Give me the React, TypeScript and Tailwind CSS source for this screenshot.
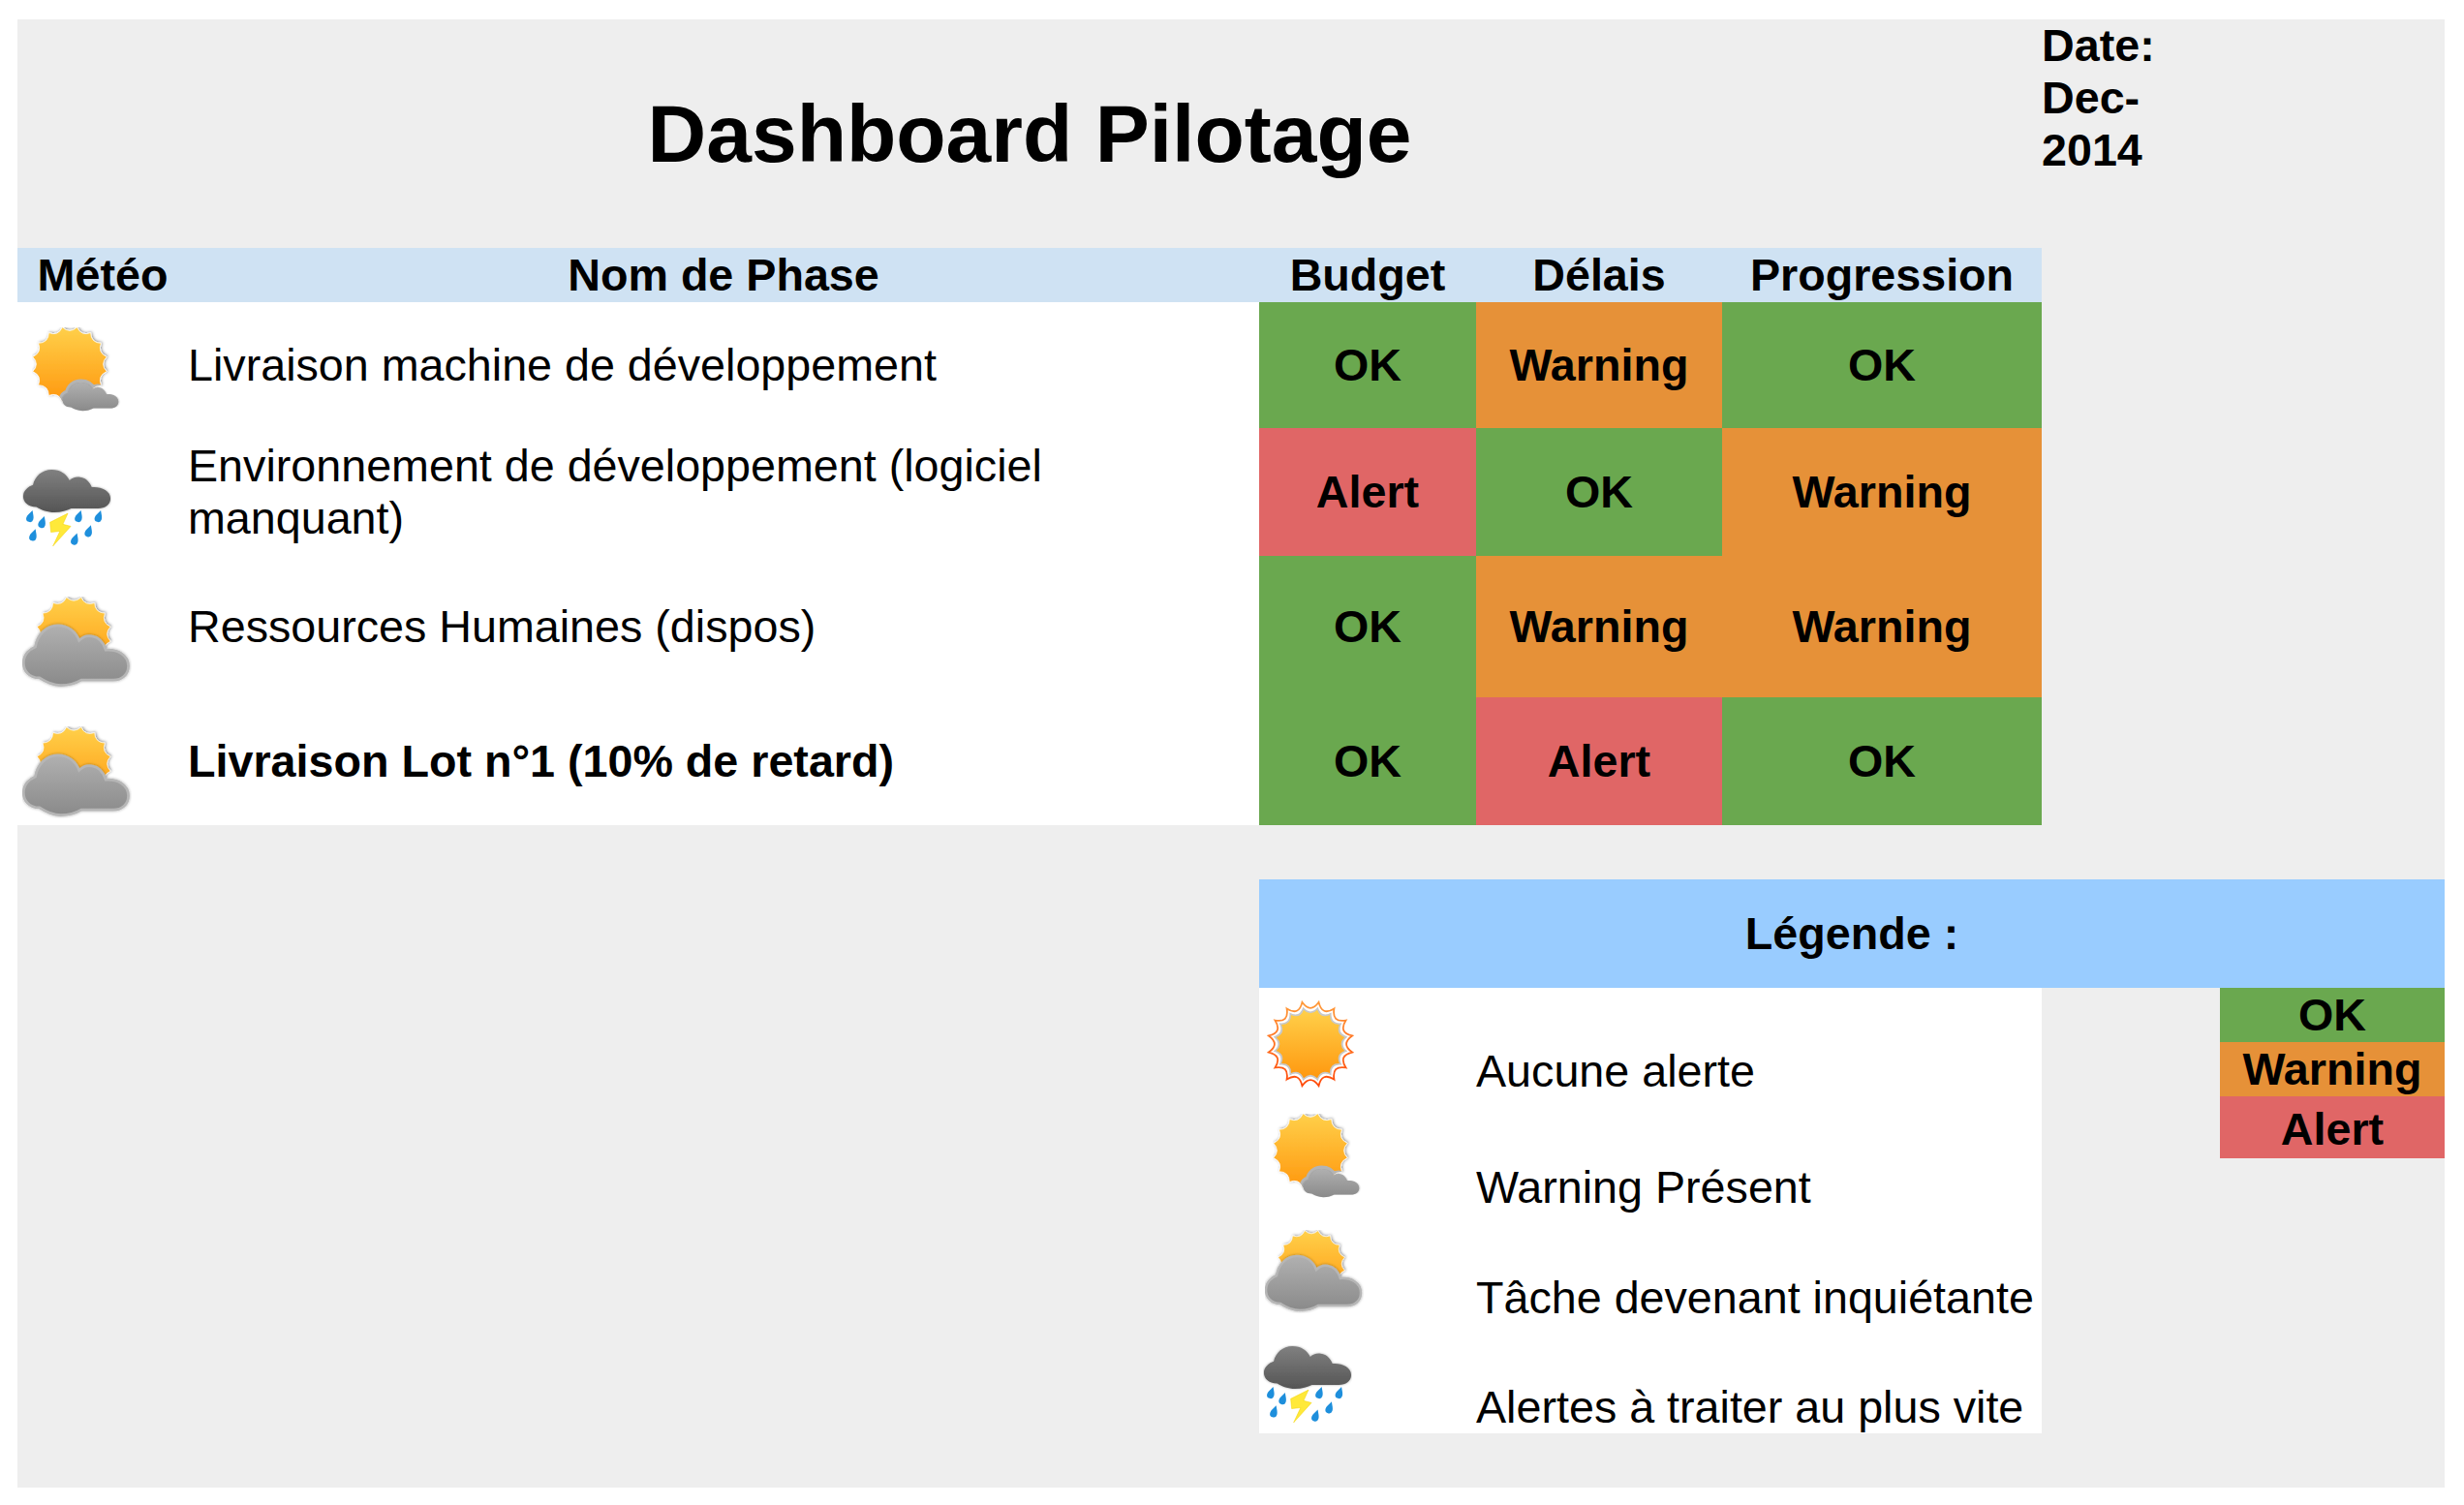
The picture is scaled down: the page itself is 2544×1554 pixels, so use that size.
import React from "react";

type Status = "OK" | "Warning" | "Alert";

const statusColor: Record<Status, string> = {
  OK: "bg-[#6aa84f]",
  Warning: "bg-[#e69138]",
  Alert: "bg-[#e06666]",
};

function sunPath(cx: number, cy: number, outer: number, ctrl: number, n: number) {
  const pts: string[] = [];
  const at = (r: number, a: number) =>
    `${(cx + r * Math.cos(a)).toFixed(2)} ${(cy + r * Math.sin(a)).toFixed(2)}`;
  for (let i = 0; i < n; i++) {
    const a = (i / n) * Math.PI * 2 + Math.PI / n;
    const next = ((i + 1) / n) * Math.PI * 2 + Math.PI / n;
    const mid = (a + next) / 2;
    if (i === 0) pts.push(`M${at(outer, a)}`);
    pts.push(`Q${at(ctrl, mid)} ${at(outer, next)}`);
  }
  return pts.join(" ") + "Z";
}

const cloudD =
  "M16 76 C6 76 1 69 1 62 C1 54 7 49 12 47 C14 36 22 27 33 27 C43 27 50 33 53 41 C56 38 60 36 65 37 C72 38 76 44 78 50 C88 49 99 54 99 65 C99 73 93 78 85 78 L55 78 C50 81 44 83 36 83 C28 83 22 80 16 76Z";

// shared gradients and shadows for all the weather icons
function IconDefs() {
  return (
    <svg width="0" height="0" className="absolute">
      <defs>
        <linearGradient id="sunGrad" x1="0" y1="0" x2="0" y2="1">
          <stop offset="0" stopColor="#ffd04a" />
          <stop offset="1" stopColor="#ff980f" />
        </linearGradient>
        <linearGradient id="ringGrad" x1="0" y1="0" x2="0" y2="1">
          <stop offset="0" stopColor="#ff9a3a" />
          <stop offset="1" stopColor="#ff4a0a" />
        </linearGradient>
        <linearGradient id="grayGrad" x1="0" y1="0" x2="0" y2="1">
          <stop offset="0" stopColor="#b0b0b0" />
          <stop offset="1" stopColor="#8a8a8a" />
        </linearGradient>
        <linearGradient id="darkGrad" x1="0" y1="0" x2="0" y2="1">
          <stop offset="0" stopColor="#808080" />
          <stop offset="1" stopColor="#555555" />
        </linearGradient>
        <filter id="softShadow" x="-20%" y="-20%" width="140%" height="140%">
          <feDropShadow dx="0" dy="0" stdDeviation="1.5" floodColor="#000" floodOpacity="0.35" />
        </filter>
        <filter id="sunShadow" x="-20%" y="-20%" width="140%" height="140%">
          <feDropShadow dx="1" dy="-0.5" stdDeviation="1.6" floodColor="#000" floodOpacity="0.45" />
        </filter>
      </defs>
    </svg>
  );
}

function SunIcon({ className }: { className: string }) {
  return (
    <svg viewBox="0 0 90 92" className={className}>
      <path d={sunPath(45, 46, 44, 31, 16)} fill="none" stroke="url(#ringGrad)" strokeWidth="1.8" />
      <path d={sunPath(45, 46, 39, 29, 16)} fill="#c8c8c8" />
      <path d={sunPath(45, 46, 36, 28, 16)} fill="url(#sunGrad)" />
    </svg>
  );
}

function SunCloudIcon({ className }: { className: string }) {
  const sun = sunPath(39, 38, 39, 31, 16);
  return (
    <svg viewBox="0 0 94 90" className={className}>
      <clipPath id="sunClip">
        <path d={sun} />
      </clipPath>
      <path d={sun} fill="url(#sunGrad)" stroke="#fff" strokeWidth="0.8" filter="url(#sunShadow)" />
      <g clipPath="url(#sunClip)">
        <path
          transform="translate(31 43) scale(0.59 0.52)"
          d={cloudD}
          fill="#b4b4b4"
          stroke="#b4b4b4"
          strokeWidth="14"
        />
      </g>
      <path
        transform="translate(31 43) scale(0.59 0.52)"
        d={cloudD}
        fill="url(#grayGrad)"
        filter="url(#softShadow)"
      />
    </svg>
  );
}

function CloudSunIcon({ className }: { className: string }) {
  const sun = sunPath(48, 35, 35, 28, 16);
  return (
    <svg viewBox="0 0 102 86" className={className}>
      <path d={sun} fill="url(#sunGrad)" stroke="#fff" strokeWidth="0.6" filter="url(#sunShadow)" />
      <path d={cloudD} fill="url(#grayGrad)" stroke="#b6b6b6" strokeWidth="2.5" filter="url(#softShadow)" />
    </svg>
  );
}

function Drop({ x, y }: { x: number; y: number }) {
  return (
    <path
      transform={`translate(${x} ${y}) rotate(18)`}
      d="M0 -7.5 C2 -3.5 3.6 -1.5 3.6 1.2 A3.6 3.6 0 0 1 -3.6 1.2 C-3.6 -1.5 -2 -3.5 0 -7.5Z"
      fill="#1e8fdc"
    />
  );
}

function StormIcon({ className }: { className: string }) {
  return (
    <svg viewBox="0 0 90 80" className={className}>
      <path
        transform="translate(0 -20) scale(0.9 0.77)"
        d={cloudD}
        fill="url(#darkGrad)"
        filter="url(#softShadow)"
      />
      <Drop x={8} y={49} />
      <Drop x={20} y={55} />
      <Drop x={11} y={68} />
      <Drop x={57} y={49} />
      <Drop x={77} y={49} />
      <Drop x={67} y={64} />
      <Drop x={53} y={72} />
      <path d="M46 45 L28 54 L29 64 L38 63 L31 78 L49 58 L41 56Z" fill="#ffe93a" stroke="#f4d200" strokeWidth="0.5" />
    </svg>
  );
}

function Cell({ status, className = "" }: { status: Status; className?: string }) {
  return (
    <div className={`${statusColor[status]} flex items-center justify-center font-bold ${className}`}>
      {status}
    </div>
  );
}

function Row({
  icon,
  name,
  bold,
  statuses,
}: {
  icon: React.ReactNode;
  name: React.ReactNode;
  bold?: boolean;
  statuses: Status[];
}) {
  return (
    <>
      <div className="flex items-start">{icon}</div>
      <div className={`flex items-center pr-[100px] leading-[54px] ${bold ? "font-bold" : ""}`}>{name}</div>
      {statuses.map((s, i) => (
        <Cell key={i} status={s} />
      ))}
    </>
  );
}

function LegendRow({ icon, label, pad }: { icon: React.ReactNode; label: string; pad: string }) {
  return (
    <div className="grid grid-cols-[224px_1fr]">
      <div className="flex items-start">{icon}</div>
      <div className={`flex items-end whitespace-nowrap ${pad}`}>{label}</div>
    </div>
  );
}

export default function App() {
  return (
    <div
      className="w-[2544px] h-[1554px] bg-white pt-[20px] pl-[18px] text-black text-[46.67px] leading-[54px]"
      style={{ fontFamily: '"Liberation Sans", Arial, sans-serif' }}
    >
      <IconDefs />
      <div className="w-[2506px] h-[1516px] bg-[#eeeeee]">
        <div className="flex">
          <div className="w-[2090px]">
            {/* Title */}
            <div className="h-[236px] flex items-center justify-center text-[84px] leading-none font-bold">
              Dashboard Pilotage
            </div>
            {/* Table */}
            <div className="grid grid-cols-[176px_1106px_224px_254px_330px] grid-rows-[56px_130px_132px_146px_132px] bg-white">
              {["Météo", "Nom de Phase", "Budget", "Délais", "Progression"].map((h) => (
                <div key={h} className="bg-[#cfe2f3] flex items-center justify-center font-bold">
                  {h}
                </div>
              ))}
              <Row
                icon={<SunCloudIcon className="w-[94px] h-[90px] ml-[15px] mt-[26px]" />}
                name="Livraison machine de développement"
                statuses={["OK", "Warning", "OK"]}
              />
              <Row
                icon={<StormIcon className="w-[92px] h-[82px] ml-[5px] mt-[42px]" />}
                name="Environnement de développement (logiciel manquant)"
                statuses={["Alert", "OK", "Warning"]}
              />
              <Row
                icon={<CloudSunIcon className="w-[113px] h-[95px] ml-[5px] mt-[42px]" />}
                name="Ressources Humaines (dispos)"
                statuses={["OK", "Warning", "Warning"]}
              />
              <Row
                icon={<CloudSunIcon className="w-[113px] h-[95px] ml-[5px] mt-[30px]" />}
                name="Livraison Lot n°1 (10% de retard)"
                bold
                statuses={["OK", "Alert", "OK"]}
              />
            </div>
          </div>
          <div className="flex-1 font-bold">
            Date:
            <br />
            Dec-
            <br />
            2014
          </div>
        </div>

        {/* Legend */}
        <div className="ml-[1282px] mt-[56px] w-[1224px]">
          <div className="h-[112px] bg-[#99ccff] flex items-center justify-center font-bold">Légende :</div>
          <div className="flex">
            <div className="w-[808px] h-[460px] bg-white grid grid-rows-[120px_115px_113px_112px]">
              <LegendRow
                icon={<SunIcon className="w-[90px] h-[92px] ml-[8px] mt-[12px]" />}
                label="Aucune alerte"
                pad="pb-[7px]"
              />
              <LegendRow
                icon={<SunCloudIcon className="w-[94px] h-[90px] ml-[14px] mt-[10px]" />}
                label="Warning Présent"
                pad="pb-[2px]"
              />
              <LegendRow
                icon={<CloudSunIcon className="w-[102px] h-[86px] ml-[6px] mt-[15px]" />}
                label="Tâche devenant inquiétante"
                pad="pb-[1px]"
              />
              <LegendRow
                icon={<StormIcon className="w-[92px] h-[82px] ml-[4px] mt-[21px]" />}
                label="Alertes à traiter au plus vite"
                pad="pb-0"
              />
            </div>
            <div className="ml-[184px] w-[232px] h-[176px] grid grid-rows-[56px_56px_64px]">
              <Cell status="OK" />
              <Cell status="Warning" />
              <Cell status="Alert" className="pt-[4px]" />
            </div>
          </div>
        </div>
      </div>
    </div>
  );
}
